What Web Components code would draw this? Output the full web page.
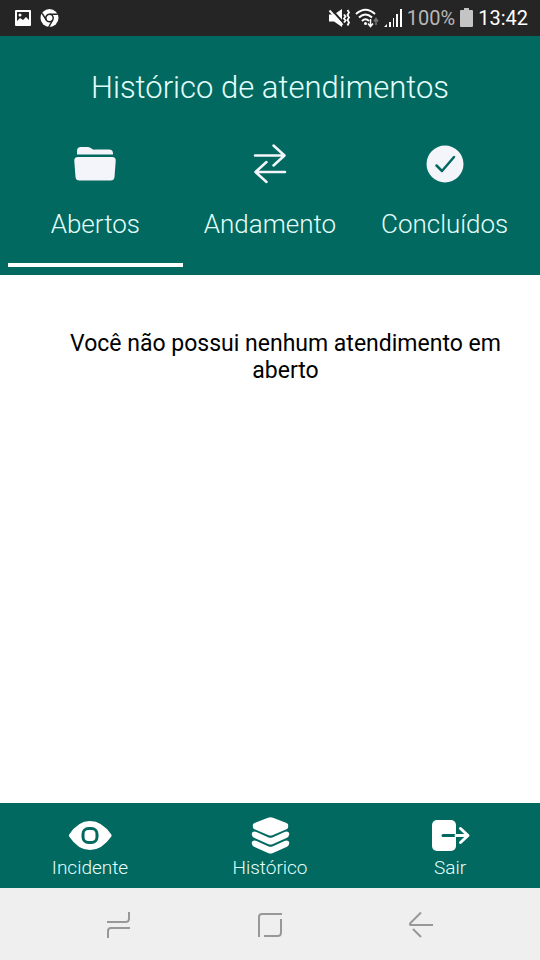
<!DOCTYPE html>
<html lang="pt-BR">
<head>
<meta charset="utf-8">
<meta name="viewport" content="width=device-width, initial-scale=1">
<title>Histórico de atendimentos</title>
<style>
  body {
    --teal: #026961;
    margin: 0;
    min-height: 100vh;
    display: flex;
    flex-direction: column;
    font-family: Roboto, "Liberation Sans", sans-serif;
    background: #fff;
  }
  main {
    flex: 1;
  }
  svg {
    display: block;
  }
</style>
</head>
<body>
  <status-bar time="13:42" battery="100%"></status-bar>

  <history-header>
    Histórico de atendimentos
    <history-tab slot="tabs" label="Abertos" selected>
      <svg width="44" height="40" viewBox="0 0 44 40" fill="#f4f5fb">
        <path d="M4 10.500V7q0-4 4-4h7q2 0 3.500 1.500T22 5.500h14q4 0 4 4v1z"/>
        <path d="M5 13h34q4 0 3.700 4l-1.200 16q-.4 3.500-4 3.500h-31q-3.600 0-4-3.500L1.300 17Q1 13 5 13z"/>
      </svg>
    </history-tab>
    <history-tab slot="tabs" label="Andamento">
      <svg width="44" height="40" viewBox="0 0 44 40" fill="none" stroke="#f4f5fb" stroke-width="2.500" stroke-linecap="round" stroke-linejoin="round">
        <path d="M7 11.500h29M25.500 1.500l11 10-11 10M37 28H8M18.500 18L7.500 28l11 10"/>
      </svg>
    </history-tab>
    <history-tab slot="tabs" label="Concluídos">
      <svg width="44" height="40" viewBox="0 0 44 40">
        <circle cx="22" cy="20" r="18.500" fill="#f4f5fb"/>
        <path d="M13.500 21.500l5.500 5.500 12-14" fill="none" stroke="#026961" stroke-width="2.500" stroke-linecap="round" stroke-linejoin="round"/>
      </svg>
    </history-tab>
  </history-header>

  <main>
    <empty-message>Você não possui nenhum atendimento em aberto</empty-message>
  </main>

  <bottom-nav>
    <nav-item label="Incidente" href="#incidente">
      <svg width="44" height="40" viewBox="0 0 44 40">
        <path d="M1.200 19.500Q10 6 22 6t21.300 13.500q.7 1 0 2Q34 35 22 35T1.200 21.500q-.7-1 0-2z" fill="#fff"/>
        <rect x="15" y="13.500" width="14" height="14" rx="5.500" fill="none" stroke="#026961" stroke-width="3"/>
      </svg>
    </nav-item>
    <nav-item label="Histórico" href="#historico">
      <svg width="44" height="40" viewBox="0 0 44 40" fill="#fff">
        <path d="M5 11q-1-1.800 1.500-3L20 2.800q2.500-.9 5 0L38.500 8q2.500 1.200 1.500 3 .8 2-1.500 3.200L25 20q-2.500 1-5 0L6.500 14.200Q4.200 13 5 11z"/>
        <path id="layer" d="M4 20q-1-2.600 1.500-3.200 1-.5 3 .2L20 22.300q2.500 1 5 0l11.500-5.300q2-.7 3-.2Q42 17.400 41 20q0 1.800-2 2.700L25 29q-2.500 1-5 0L6 22.700q-2-.9-2-2.700z"/>
        <use href="#layer" y="9"/>
      </svg>
    </nav-item>
    <nav-item label="Sair" href="#sair">
      <svg width="44" height="40" viewBox="0 0 44 40" fill="none" stroke-width="3" stroke-linecap="round" stroke-linejoin="round">
        <rect x="4" y="5" width="24" height="31" rx="5" fill="#fff"/>
        <path d="M15 20.500h13" stroke="#026961"/>
        <path d="M28 20.500h11M32.500 13.500l7.500 7-7.500 7" stroke="#fff"/>
      </svg>
    </nav-item>
  </bottom-nav>

  <system-nav></system-nav>

<script>
class StatusBar extends HTMLElement {
  connectedCallback() {
    this.attachShadow({ mode: 'open' });
    this.shadowRoot.innerHTML = `
      <style>
        :host {
          display: flex;
          align-items: center;
          justify-content: space-between;
          height: 36px;
          padding: 0 12px 0 14px;
          background: #252525;
          color: #fff;
          font-size: 20px;
        }
        .group {
          display: flex;
          align-items: center;
          gap: 5px;
        }
        .notices {
          gap: 8px;
        }
        .battery {
          color: #b8b8b8;
        }
        svg {
          display: block;
        }
      </style>
      <div class="group notices">
        <svg width="18" height="18" viewBox="0 0 18 18">
          <rect x="1" y="1" width="16" height="16" rx="1" fill="#fff"/>
          <path d="M3 3h12v8l-3-3-3 3-3-2-3 3z" fill="#252525"/>
          <circle cx="6" cy="6" r="1.500" fill="#fff"/>
        </svg>
        <svg width="19" height="18" viewBox="0 0 19 18">
          <circle cx="9.500" cy="9" r="9" fill="#fff"/>
          <circle cx="9.500" cy="9" r="3.700" fill="none" stroke="#252525" stroke-width="1.500"/>
          <path d="M9.500 5.300h8.200M6.300 11L2.200 4.300M12.700 11l-4 7" stroke="#252525" stroke-width="1.500"/>
        </svg>
      </div>
      <div class="group">
        <svg width="22" height="20" viewBox="0 0 22 20">
          <path d="M1 6.500h5L14 1v18l-8-5.500H1z" fill="#fff"/>
          <path d="M3 1l13 14.500" stroke="#252525" stroke-width="2"/>
          <path d="M1.500 2.500l13 14.500" stroke="#fff" stroke-width="2"/>
          <path d="M16 6.500l1.500 2-1.500 2 1.500 2-1.500 2M19.500 2l1.500 2.500L19.500 7 21 9.500 19.500 12l1.500 2.500-1.500 3" fill="none" stroke="#fff" stroke-width="1.800"/>
        </svg>
        <svg width="24" height="20" viewBox="0 0 24 20" fill="none" stroke="#fff" stroke-width="2">
          <path d="M1 6q9.500-8.500 19 0M4 9.500q6.500-6 13 0M7 13q3.500-3.500 7 0"/>
          <circle cx="10.500" cy="15.500" r="1.500" fill="#fff" stroke="none"/>
          <path d="M15.500 11v7M13 15.500l2.500 3 2.500-3" stroke-width="1.500"/>
          <path d="M21 17v-6M19 13.500l2-3 2 3" stroke="#777" stroke-width="1.500"/>
        </svg>
        <svg width="18" height="20" viewBox="0 0 18 20" fill="#fff">
          <path d="M0 19l3-3v3zM5 14h2v5H5zM9 10h1v9H9zM12 6h2v13h-2zM16 1h2v18h-2z"/>
        </svg>
        <span class="battery">${this.getAttribute('battery')}</span>
        <svg width="13" height="20" viewBox="0 0 13 20" fill="#c4c4c4">
          <path d="M4 0h5v2h3q1 0 1 1v15q0 1-1 1H1q-1 0-1-1V3q0-1 1-1h3z"/>
        </svg>
        <time>${this.getAttribute('time')}</time>
      </div>
    `;
  }
}

class HistoryHeader extends HTMLElement {
  connectedCallback() {
    this.attachShadow({ mode: 'open' });
    this.shadowRoot.innerHTML = `
      <style>
        :host {
          display: block;
          padding: 32px 8px 8px;
          background: var(--teal);
          color: #e4fffb;
        }
        h1 {
          margin: 0 0 20px;
          font-size: 31px;
          font-weight: 300;
          line-height: 40px;
          text-align: center;
        }
        .tabs {
          display: grid;
          grid-template-columns: repeat(3, 1fr);
        }
      </style>
      <h1><slot></slot></h1>
      <div class="tabs" role="tablist"><slot name="tabs"></slot></div>
    `;
  }
}

class HistoryTab extends HTMLElement {
  connectedCallback() {
    const selected = this.hasAttribute('selected');
    this.attachShadow({ mode: 'open' });
    this.shadowRoot.innerHTML = `
      <style>
        :host {
          display: block;
        }
        button {
          display: flex;
          flex-direction: column;
          align-items: center;
          gap: 24px;
          width: 100%;
          padding: 16px 0 23px;
          border: 0;
          border-bottom: 4px solid transparent;
          background: none;
          color: inherit;
          font: inherit;
          font-size: 26px;
          font-weight: 300;
          line-height: 32px;
          cursor: pointer;
        }
        button[aria-selected="true"] {
          border-bottom-color: #fff;
        }
      </style>
      <button type="button" role="tab" aria-selected="${selected}">
        <slot></slot>
        <span>${this.getAttribute('label')}</span>
      </button>
    `;
    this.shadowRoot.querySelector('button').addEventListener('click', () => this.select());
  }

  select() {
    this.parentElement.querySelectorAll('history-tab').forEach(tab => {
      tab.shadowRoot.querySelector('button').setAttribute('aria-selected', tab === this);
    });
  }
}

class EmptyMessage extends HTMLElement {
  connectedCallback() {
    this.attachShadow({ mode: 'open' });
    this.shadowRoot.innerHTML = `
      <style>
        :host {
          display: block;
          padding: 55px 16px 16px 47px;
        }
        p {
          margin: 0;
          color: #000;
          font-size: 23px;
          line-height: 27px;
          text-align: center;
        }
      </style>
      <p><slot></slot></p>
    `;
  }
}

class BottomNav extends HTMLElement {
  connectedCallback() {
    this.attachShadow({ mode: 'open' });
    this.shadowRoot.innerHTML = `
      <style>
        :host {
          display: block;
        }
        nav {
          display: grid;
          grid-template-columns: repeat(3, 1fr);
          background: var(--teal);
          color: #e4fffb;
        }
      </style>
      <nav><slot></slot></nav>
    `;
  }
}

class NavItem extends HTMLElement {
  connectedCallback() {
    this.attachShadow({ mode: 'open' });
    this.shadowRoot.innerHTML = `
      <style>
        :host {
          display: block;
        }
        a {
          display: flex;
          flex-direction: column;
          align-items: center;
          gap: 2px;
          padding: 12px 0 9px;
          color: inherit;
          font-size: 19px;
          font-weight: 300;
          line-height: 22px;
          text-decoration: none;
        }
      </style>
      <a href="${this.getAttribute('href')}">
        <slot></slot>
        <span>${this.getAttribute('label')}</span>
      </a>
    `;
  }
}

class SystemNav extends HTMLElement {
  connectedCallback() {
    this.attachShadow({ mode: 'open' });
    this.shadowRoot.innerHTML = `
      <style>
        :host {
          display: grid;
          grid-template-columns: repeat(3, 1fr);
          padding: 0 44px;
          background: #efefef;
        }
        button {
          display: flex;
          align-items: center;
          justify-content: center;
          height: 72px;
          padding: 0;
          border: 0;
          background: none;
          cursor: pointer;
        }
        svg {
          fill: none;
          stroke: #989898;
          stroke-width: 2;
        }
      </style>
      <button type="button" aria-label="Recentes">
        <svg width="28" height="28" viewBox="0 0 28 28"><path d="M2 12h18.500q3.500 0 3.500-3.500V2M25 18H6q-3 0-3 3v7"/></svg>
      </button>
      <button type="button" aria-label="Início">
        <svg width="28" height="28" viewBox="0 0 28 28"><path d="M3 27V7q0-3 3-3h20M25 9v13.500q0 3.500-3.500 3.500H8"/></svg>
      </button>
      <button type="button" aria-label="Voltar">
        <svg width="28" height="28" viewBox="0 0 28 28"><path d="M26 15H4q-2 0-.5-2L14 2.500M6 19l8 8"/></svg>
      </button>
    `;
  }
}

customElements.define('status-bar', StatusBar);
customElements.define('history-header', HistoryHeader);
customElements.define('history-tab', HistoryTab);
customElements.define('empty-message', EmptyMessage);
customElements.define('bottom-nav', BottomNav);
customElements.define('nav-item', NavItem);
customElements.define('system-nav', SystemNav);
</script>
</body>
</html>
